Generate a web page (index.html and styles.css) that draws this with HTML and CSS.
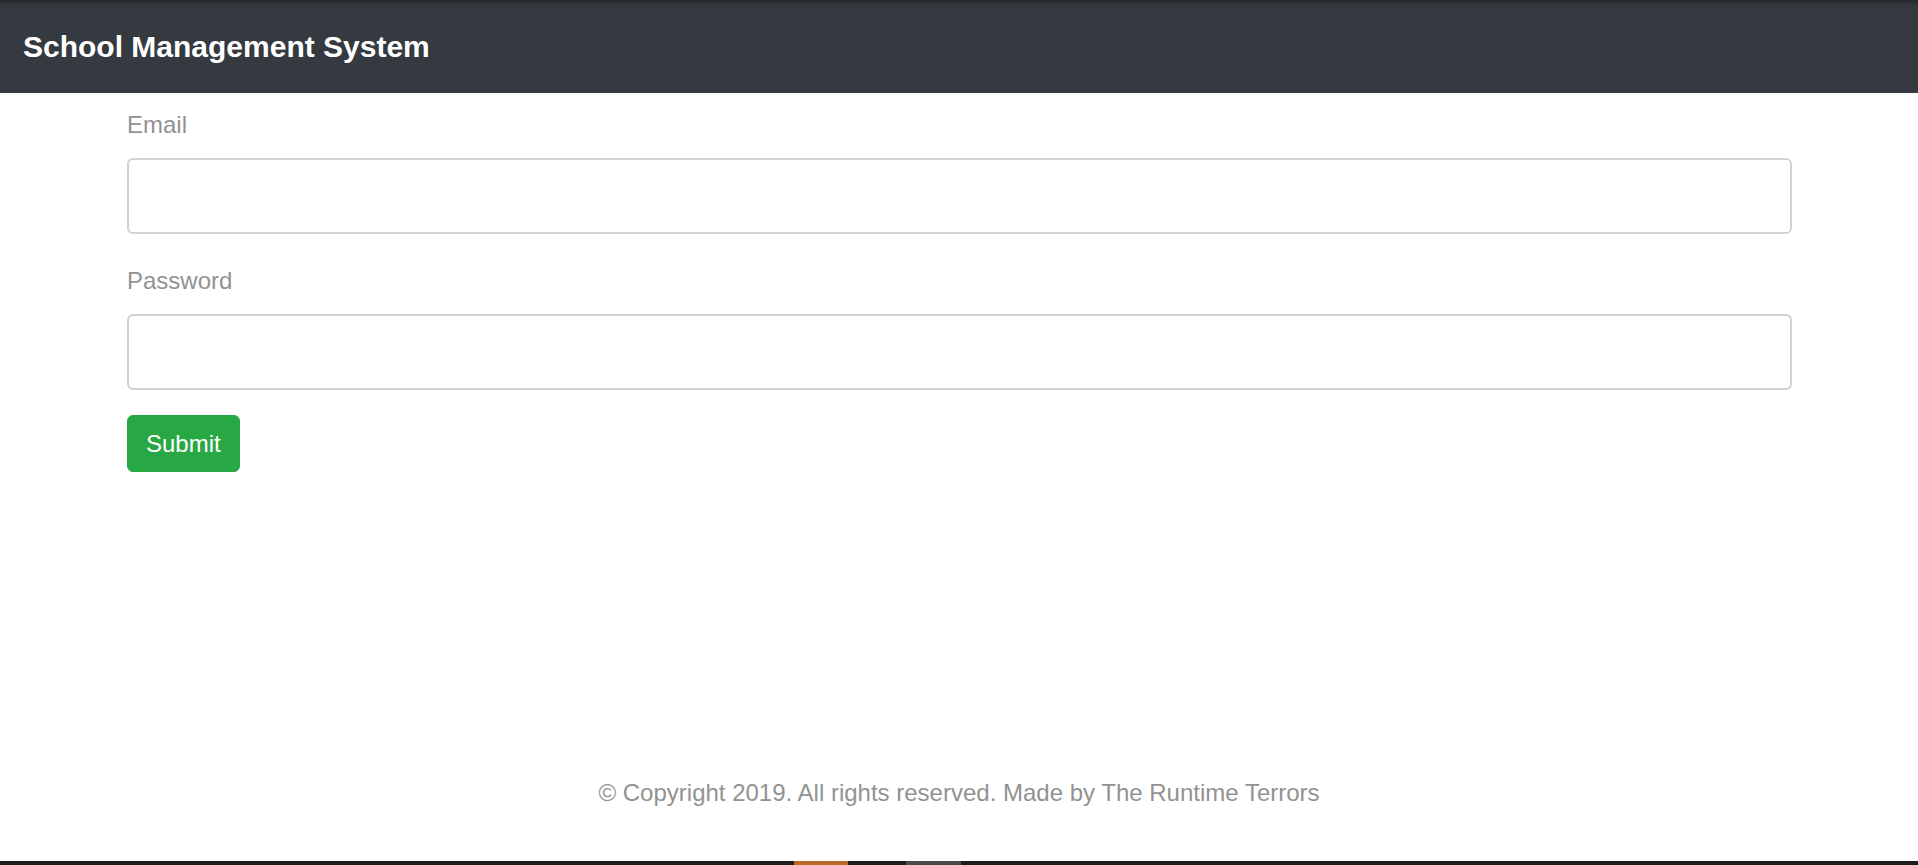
FILE: index.html
```html
<!DOCTYPE html>
<html lang="en">
<head>
<meta charset="utf-8">
<title>School Management System</title>
<link rel="stylesheet" href="styles.css">
</head>
<body>
<div class="page">
  <header class="navbar">
    <span class="brand">School Management System</span>
  </header>
  <main class="container">
    <form class="login-form">
      <div class="form-group">
        <label class="form-label" for="email">Email</label>
        <input class="form-control" id="email" type="email">
      </div>
      <div class="form-group">
        <label class="form-label" for="password">Password</label>
        <input class="form-control" id="password" type="password">
      </div>
      <div class="actions">
        <button class="btn-submit" type="button">Submit</button>
      </div>
    </form>
  </main>
  <footer class="footer">© Copyright 2019. All rights reserved. Made by The Runtime Terrors</footer>
  <div class="taskbar">
    <span class="tb-gap1"></span>
    <span class="tb-orange"></span>
    <span class="tb-gap2"></span>
    <span class="tb-gray"></span>
  </div>
</div>
</body>
</html>
```

FILE: styles.css
```css
html, body {
  margin: 0;
  padding: 0;
  background: #ffffff;
}

body {
  font-family: "Liberation Sans", Arial, sans-serif;
}

.page {
  display: flex;
  flex-direction: column;
  height: 865px;
  overflow: hidden;
}

.navbar {
  height: 93px;
  flex: 0 0 93px;
  display: flex;
  align-items: center;
  padding-left: 23px;
  box-sizing: border-box;
  background: linear-gradient(to bottom, #22262a 0px, #30353b 4px, #343a40 8px, #343a40 100%);
}

.brand {
  color: #ffffff;
  font-size: 30px;
  font-weight: bold;
  line-height: 45px;
}

.container {
  flex: 1 1 auto;
  padding: 14px 126px 0 127px;
}

.login-form {
  display: flex;
  flex-direction: column;
}

.form-group {
  display: flex;
  flex-direction: column;
  margin-bottom: 29px;
}

.form-label {
  color: #929292;
  font-size: 24px;
  line-height: 36px;
  margin-bottom: 15px;
}

.form-control {
  box-sizing: border-box;
  width: 100%;
  height: 76px;
  border: 2px solid #cfd1d6;
  border-radius: 6px;
  background: #ffffff;
  font-size: 24px;
  padding: 0 18px;
  margin: 0;
}

.actions {
  display: flex;
  margin-top: -4px;
}

.btn-submit {
  font-family: "Liberation Sans", Arial, sans-serif;
  font-size: 24px;
  line-height: 36px;
  color: #ffffff;
  background: #28a745;
  border: 1.5px solid #28a745;
  border-radius: 6px;
  padding: 9px 18px;
  height: 57px;
  box-sizing: border-box;
  cursor: pointer;
}

.footer {
  text-align: center;
  color: #929292;
  font-size: 24px;
  line-height: 36px;
  padding-bottom: 50px;
}

.taskbar {
  flex: 0 0 4px;
  height: 4px;
  background: #1c1c1c;
  display: flex;
}

.tb-gap1 { width: 794px; }
.tb-orange { width: 54px; background: #b8692a; }
.tb-gap2 { width: 58px; }
.tb-gray { width: 55px; background: #4a4a4a; }
```
